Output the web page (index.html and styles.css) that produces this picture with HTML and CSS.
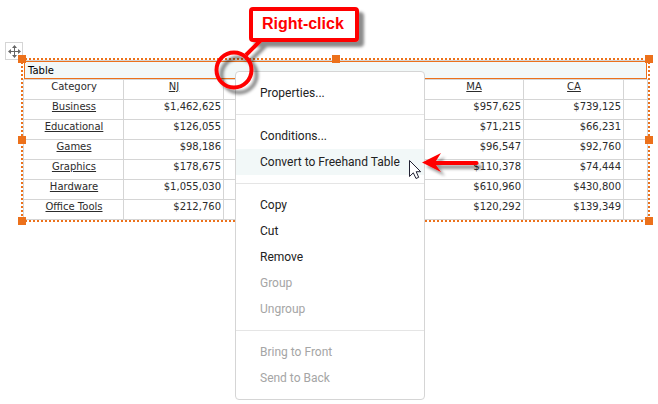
FILE: index.html
```
<!DOCTYPE html>
<html lang="en">
<head>
<meta charset="utf-8">
<title>Table</title>
<link rel="stylesheet" href="styles.css">
</head>
<body>
<main class="canvas">
  <div class="mover">
    <svg width="18" height="18" viewBox="0 0 18 18"><path d="M9.500 4.500v10M4.500 9.500h10" stroke="#666" stroke-width="1"/><path d="M9.500 3l2.500 3H7zM9.500 16l2.500-3H7zM3 9.500l3-2.500v5zM16 9.500l-3-2.500v5z" fill="#666"/></svg>
  </div>

  <section class="assembly">
    <div class="title">Table</div>
    <table class="grid">
      <colgroup><col class="c"><col class="c"><col class="c"><col class="c"><col class="c"><col class="c"><col></colgroup>
      <tr class="head"><td>Category</td><td><u>NJ</u></td><td></td><td></td><td><u>MA</u></td><td><u>CA</u></td><td></td></tr>
      <tr><th><u>Business</u></th><td>$1,462,625</td><td></td><td></td><td>$957,625</td><td>$739,125</td><td></td></tr>
      <tr><th><u>Educational</u></th><td>$126,055</td><td></td><td></td><td>$71,215</td><td>$66,231</td><td></td></tr>
      <tr><th><u>Games</u></th><td>$98,186</td><td></td><td></td><td>$96,547</td><td>$92,760</td><td></td></tr>
      <tr><th><u>Graphics</u></th><td>$178,675</td><td></td><td></td><td>$110,378</td><td>$74,444</td><td></td></tr>
      <tr><th><u>Hardware</u></th><td>$1,055,030</td><td></td><td></td><td>$610,960</td><td>$430,800</td><td></td></tr>
      <tr><th><u>Office Tools</u></th><td>$212,760</td><td></td><td></td><td>$120,292</td><td>$139,349</td><td></td></tr>
    </table>
    <div class="outline"></div>
    <i class="handle top left"></i><i class="handle top center"></i><i class="handle top right"></i>
    <i class="handle middle left"></i><i class="handle middle right"></i>
    <i class="handle bottom left"></i><i class="handle bottom right"></i>
  </section>

  <nav class="menu">
    <ul><li>Properties...</li></ul>
    <ul><li>Conditions...</li><li class="active">Convert to Freehand Table</li></ul>
    <ul><li>Copy</li><li>Cut</li><li>Remove</li><li class="off">Group</li><li class="off">Ungroup</li></ul>
    <ul><li class="off">Bring to Front</li><li class="off">Send to Back</li></ul>
  </nav>

  <svg class="marks" width="658" height="404" viewBox="0 0 658 404">
    <defs>
      <filter id="shadow" x="-20%" y="-50%" width="150%" height="220%"><feDropShadow dx="5" dy="5" stdDeviation="1.5" flood-color="#000" flood-opacity=".45"/></filter>
      <filter id="arrow-shadow" x="-20%" y="-50%" width="150%" height="220%"><feDropShadow dx="4" dy="4" stdDeviation="1.5" flood-color="#000" flood-opacity=".4"/></filter>
    </defs>
    <g filter="url(#shadow)">
      <path d="M246 55L261 40" stroke="#f00" stroke-width="4"/>
      <circle cx="234" cy="70" r="17.500" fill="none" stroke="#f00" stroke-width="4"/>
      <rect x="251" y="9" width="106" height="31" rx="2" fill="#fff" stroke="#f00" stroke-width="4"/>
    </g>
    <g filter="url(#arrow-shadow)" fill="#f00">
      <path d="M422 162.500L441 153L436 161H476.500Q478.500 161 478.500 163T476.500 165H436L441 172Z"/>
    </g>
    <path d="M409.500 160.500V176.500L413.300 172.800L416 178.500L418.700 177.300L416.200 171.700H420.700Z" fill="#fff" stroke="#223" stroke-width="1"/>
  </svg>
  <div class="callout">Right-click</div>
</main>
</body>
</html>
```
FILE: styles.css
```
* { box-sizing: border-box; }
body { margin: 0; background: #fff; }
.canvas { position: relative; width: 658px; height: 404px; overflow: hidden; }
.assembly {
  position: absolute; left: 23px; top: 60px; width: 625px; height: 160px;
  border-top: 1px solid #d5d5d5;
  font: 10px/14px "DejaVu Sans", Verdana, sans-serif; color: #2c2c2c;
}
.title {
  height: 18px; margin: 0 1px; padding-left: 3px;
  border: 1px solid #ec711b; background: #f2f8f8;
  line-height: 18px; color: #000;
}
.grid { width: 625px; table-layout: fixed; border-collapse: separate; border-spacing: 0; border-left: 1px solid #d5d5d5; border-top: 1px solid #d5d5d5; }
.grid .c { width: 100px; }
.grid td, .grid th { height: 20px; padding: 0 2px 5px; border-right: 1px solid #d5d5d5; border-bottom: 1px solid #d5d5d5; font-weight: normal; text-align: right; vertical-align: top; white-space: nowrap; }
.grid th, .grid .head td { padding-left: 3px; text-align: center; }
.grid u { text-underline-offset: 1px; text-decoration-thickness: 1px; }
.outline {
  position: absolute; left: -2px; top: -3px; width: 629px; height: 164px;
  background:
    repeating-linear-gradient(90deg, #ec711b 0 2px, transparent 2px 4px) 0 0 / 100% 2px no-repeat,
    repeating-linear-gradient(90deg, #ec711b 0 2px, transparent 2px 4px) 0 100% / 100% 2px no-repeat,
    repeating-linear-gradient(#ec711b 0 2px, transparent 2px 4px) 0 0 / 2px 100% no-repeat,
    repeating-linear-gradient(#ec711b 0 2px, transparent 2px 4px) 100% 0 / 2px 100% no-repeat;
}
.handle { position: absolute; width: 8px; height: 8px; background: #ec711b; }
.top { top: -6px; }
.middle { top: 75px; }
.bottom { top: 156px; }
.left { left: -5px; }
.center { left: 309px; }
.right { left: 622px; }
.mover { position: absolute; left: 5px; top: 42px; width: 18px; height: 18px; border: 1px solid #d5d5d5; }
.mover svg { display: block; margin: -1px; }
.menu {
  position: absolute; left: 235px; top: 71px; width: 190px;
  border: 1px solid #d5d5d5; border-radius: 4px; background: #fff;
  font: 12px/26px Roboto, sans-serif; color: #222;
}
.menu ul { margin: 0; padding: 8px 0; list-style: none; }
.menu ul + ul { border-top: 1px solid #e5e5e5; }
.menu li { height: 26px; padding-left: 24px; }
.menu .active { background: #f2f8f8; }
.menu .off { color: #a5a5a5; }
.marks { position: absolute; left: 0; top: 0; }
.callout {
  position: absolute; left: 251px; top: 9px; width: 106px; height: 31px; padding-left: 11px;
  font: bold 16px/30px "Liberation Sans", Arial, sans-serif; color: #f00; white-space: nowrap;
}
```
